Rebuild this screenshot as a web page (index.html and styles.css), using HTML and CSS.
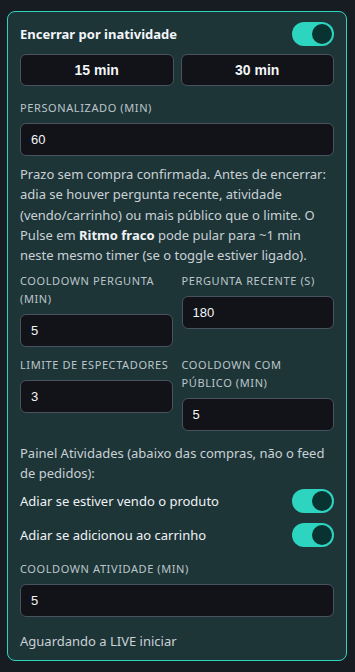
FILE: index.html
```html
<!DOCTYPE html>
<html lang="pt-BR">
<head>
    <meta charset="UTF-8">
    <meta name="viewport" content="width=device-width, initial-scale=1.0">
    <title>Encerrar por inatividade</title>
    <link rel="stylesheet" href="styles.css">
</head>
<body>
    <div class="card">
        <div class="head-row">
            <span class="title">Encerrar por inatividade</span>
            <span class="toggle on"><span class="knob"></span></span>
        </div>

        <div class="presets">
            <button class="preset">15 min</button>
            <button class="preset">30 min</button>
        </div>

        <div class="field top-gap">
            <label class="label">Personalizado (min)</label>
            <input class="input" type="text" value="60">
        </div>

        <p class="help">Prazo sem compra confirmada. Antes de encerrar: adia se houver pergunta recente, atividade (vendo/carrinho) ou mais público que o limite. O Pulse em <b>Ritmo fraco</b> pode pular para ~1 min neste mesmo timer (se o toggle estiver ligado).</p>

        <div class="grid">
            <div class="field">
                <label class="label">Cooldown pergunta (min)</label>
                <input class="input" type="text" value="5">
            </div>
            <div class="field">
                <label class="label">Pergunta recente (s)</label>
                <input class="input" type="text" value="180">
            </div>
            <div class="field">
                <label class="label">Limite de espectadores</label>
                <input class="input" type="text" value="3">
            </div>
            <div class="field">
                <label class="label">Cooldown com público (min)</label>
                <input class="input" type="text" value="5">
            </div>
        </div>

        <p class="help panel-note">Painel Atividades (abaixo das compras, não o feed de pedidos):</p>

        <div class="switch-row">
            <span>Adiar se estiver vendo o produto</span>
            <span class="toggle on"><span class="knob"></span></span>
        </div>
        <div class="switch-row">
            <span>Adiar se adicionou ao carrinho</span>
            <span class="toggle on"><span class="knob"></span></span>
        </div>

        <div class="field top-gap">
            <label class="label">Cooldown atividade (min)</label>
            <input class="input" type="text" value="5">
        </div>

        <p class="status">Aguardando a LIVE iniciar</p>
    </div>
</body>
</html>
```

FILE: styles.css
```css
body {
    margin: 0;
    padding: 11px 8px 0 7px;
    background-color: #171b22;
    font-family: "Noto Sans", sans-serif;
    font-size: 13px;
    color: #c9d1d5;
}
.card {
    background: #1e3538;
    border: 1px solid #2dd4bf;
    border-radius: 8px;
    padding: 10px 12px 9px;
}
.head-row {
    display: flex;
    justify-content: space-between;
    align-items: center;
    height: 24px;
}
.title {
    font-weight: bold;
    color: #f3f6f8;
    font-size: 13px;
}
.toggle {
    display: flex;
    align-items: center;
    width: 42px;
    height: 24px;
    border-radius: 12px;
    background: #2dd4bf;
    padding: 2px;
    box-sizing: border-box;
}
.toggle.on {
    justify-content: flex-end;
}
.knob {
    width: 20px;
    height: 20px;
    border-radius: 50%;
    background: #083330;
}
.presets {
    display: grid;
    grid-template-columns: 1fr 1fr;
    gap: 7px;
    margin-top: 8px;
}
.preset {
    height: 32px;
    background: #111318;
    border: 1px solid #4a5260;
    border-radius: 6px;
    color: #f3f6f8;
    font-family: "Liberation Sans", Arial, sans-serif;
    font-weight: bold;
    font-size: 14px;
}
.field {
    display: flex;
    flex-direction: column;
    min-width: 0;
}
.top-gap {
    margin-top: 13px;
}
.label {
    font-size: 11px;
    line-height: 18px;
    letter-spacing: 0.6px;
    text-transform: uppercase;
    color: #bcc5c9;
    margin-bottom: 6px;
}
.input {
    width: 100%;
    min-width: 0;
    height: 33px;
    box-sizing: border-box;
    background: #111318;
    border: 1px solid #4a5260;
    border-radius: 6px;
    color: #f3f6f8;
    padding: 0 10px;
    font-family: "Liberation Sans", Arial, sans-serif;
    font-size: 13px;
}
.help {
    margin: 8px 0 0;
    line-height: 20.3px;
}
.help b {
    color: #eef2f4;
}
.grid {
    display: grid;
    grid-template-columns: minmax(0, 1fr) minmax(0, 1fr);
    column-gap: 9px;
    row-gap: 9px;
    align-items: start;
    margin-top: 7px;
}
.panel-note {
    margin-top: 12px;
    line-height: 20px;
}
.switch-row {
    display: flex;
    justify-content: space-between;
    align-items: center;
    height: 24px;
    color: #eef2f4;
    margin-top: 10px;
}
.panel-note + .switch-row {
    margin-top: 6px;
}
.status {
    margin: 14px 0 0;
    line-height: 20px;
}
```
